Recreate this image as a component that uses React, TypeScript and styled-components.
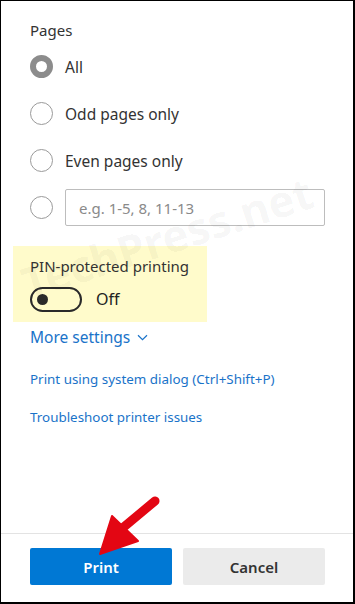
import * as React from 'react';
import styled, { createGlobalStyle } from 'styled-components';

const GlobalStyle = createGlobalStyle`
    html, body {
        margin: 0;
        padding: 0;
        background: #fff;
    }
    * {
        box-sizing: border-box;
    }
`;

const Frame = styled.div`
    position: relative;
    width: 355px;
    height: 604px;
    display: flex;
    flex-direction: column;
    border-left: 1px solid #000;
    border-top: 1px solid #000;
    border-right: 2px solid #000;
    border-bottom: 2px solid #000;
    font-family: "Noto Sans", "Open Sans", sans-serif;
    color: #2b2b2b;
    overflow: hidden;
`;

const Content = styled.div`
    flex: 1;
    padding: 19px 27px 0 29px;
    display: flex;
    flex-direction: column;
`;

const Heading = styled.div`
    font-size: 15px;
    line-height: 20px;
    color: #333;
`;

const RadioList = styled.div`
    margin-top: 3px;
    display: flex;
    flex-direction: column;
`;

const RadioRow = styled.label`
    height: 47px;
    display: flex;
    align-items: center;
    gap: 12px;
    font-size: 15.5px;
    color: #333;
`;

const Radio = styled.span<{ $checked?: boolean }>`
    width: 23px;
    height: 23px;
    flex: none;
    border-radius: 50%;
    border: ${p => (p.$checked ? '6px solid #8c8c8c' : '1.5px solid #9a9a9a')};
    background: #fff;
`;

const RangeInput = styled.input`
    width: 260px;
    height: 37px;
    border: 1px solid #bdbdbd;
    border-radius: 2px;
    padding: 0 13px;
    font-family: inherit;
    font-size: 15px;
    color: #333;
    outline: none;
    background: transparent;

    &::placeholder {
        color: #8a8a8a;
    }
`;

const Highlight = styled.div`
    margin: 15px 0 0 -17px;
    width: 194px;
    padding: 10px 17px 10px;
    background: #fffbcb;
    display: flex;
    flex-direction: column;
    gap: 10px;
`;

const Label = styled.div`
    font-size: 15px;
    line-height: 20px;
    color: #333;
`;

const ToggleRow = styled.div`
    height: 26px;
    display: flex;
    align-items: center;
    gap: 14px;
    font-size: 16px;
    color: #222;
`;

const Toggle = styled.span`
    width: 52px;
    height: 25px;
    border: 2px solid #2a2a2a;
    border-radius: 13px;
    display: flex;
    align-items: center;
    padding-left: 5px;

    &::before {
        content: '';
        width: 11px;
        height: 11px;
        border-radius: 50%;
        background: #2a2a2a;
    }
`;

const Link = styled.a<{ $size?: number; $gap?: number }>`
    display: flex;
    align-items: center;
    gap: 7px;
    margin-top: ${p => p.$gap ?? 0}px;
    font-size: ${p => p.$size ?? 13.4}px;
    line-height: 20px;
    color: #1a73c9;
    text-decoration: none;
    cursor: pointer;
`;

const Footer = styled.div`
    border-top: 1px solid #e3e3e3;
    padding: 14px 28px 17px 29px;
    display: flex;
    gap: 11px;
`;

const Button = styled.button<{ $primary?: boolean }>`
    flex: 1;
    height: 37px;
    border: none;
    border-radius: 2px;
    font-family: inherit;
    font-size: 15px;
    font-weight: 600;
    background: ${p => (p.$primary ? '#0078d4' : '#ebebeb')};
    color: ${p => (p.$primary ? '#fff' : '#333')};
    cursor: pointer;
`;

const Watermark = styled.div`
    position: absolute;
    left: 22px;
    top: 258px;
    font-family: "Noto Sans", sans-serif;
    font-size: 44px;
    line-height: 50px;
    font-weight: 700;
    color: rgba(0, 0, 0, 0.045);
    transform: rotate(-18deg);
    transform-origin: left center;
    pointer-events: none;
    white-space: nowrap;
`;

const ArrowLayer = styled.svg`
    position: absolute;
    left: 90px;
    top: 488px;
    pointer-events: none;
`;

const Chevron = () => (
    <svg width="11" height="7" viewBox="0 0 11 7">
        <path d="M1 1.2 L5.5 5.6 L10 1.2" fill="none" stroke="#1a73c9" strokeWidth="1.2" />
    </svg>
);

const App = (): JSX.Element => {
    return (
        <Frame>
            <GlobalStyle />
            <Content>
                <Heading>Pages</Heading>
                <RadioList>
                    <RadioRow>
                        <Radio $checked />
                        All
                    </RadioRow>
                    <RadioRow>
                        <Radio />
                        Odd pages only
                    </RadioRow>
                    <RadioRow>
                        <Radio />
                        Even pages only
                    </RadioRow>
                    <RadioRow>
                        <Radio />
                        <RangeInput type="text" placeholder="e.g. 1-5, 8, 11-13" />
                    </RadioRow>
                </RadioList>
                <Highlight>
                    <Label>PIN-protected printing</Label>
                    <ToggleRow>
                        <Toggle />
                        Off
                    </ToggleRow>
                </Highlight>
                <Link $size={15.5} $gap={5}>
                    More settings <Chevron />
                </Link>
                <Link $gap={22}>Print using system dialog (Ctrl+Shift+P)</Link>
                <Link $gap={18}>Troubleshoot printer issues</Link>
            </Content>
            <Footer>
                <Button $primary>Print</Button>
                <Button>Cancel</Button>
            </Footer>
            <Watermark>TechPress.net</Watermark>
            <ArrowLayer width="75" height="72" viewBox="0 0 75 72">
                <line x1="64" y1="12" x2="28" y2="42" stroke="#e30613" strokeWidth="9" strokeLinecap="round" />
                <polygon points="9,65 21,27 47,52" fill="#e30613" stroke="#e30613" strokeWidth="2" strokeLinejoin="round" />
            </ArrowLayer>
        </Frame>
    );
};

export default App;
